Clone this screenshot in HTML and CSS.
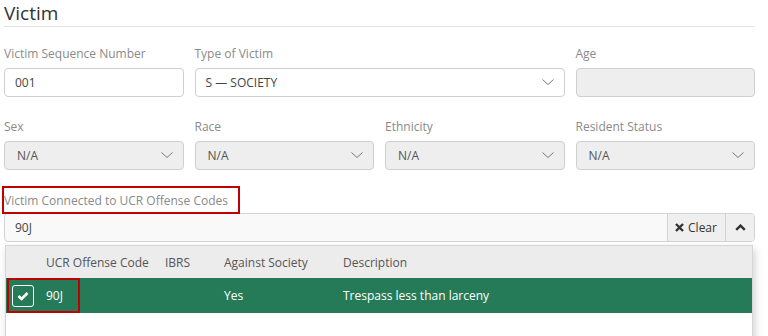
FILE: index.html
```html
<!DOCTYPE html>
<html>
<head>
<meta charset="utf-8">
<link rel="stylesheet" href="styles.css">
</head>
<body>
<div class="page">
  <h2 class="section-title">Victim</h2>

  <div class="row row-first">
    <div class="field">
      <label class="lbl">Victim Sequence Number</label>
      <div class="control">001</div>
    </div>
    <div class="field span2">
      <label class="lbl">Type of Victim</label>
      <div class="control select">S — SOCIETY
        <svg class="chev" width="12" height="7" viewBox="0 0 12 7"><polyline points="0.5,0.5 6,5.5 11.5,0.5" fill="none" stroke="#777" stroke-width="1"/></svg>
      </div>
    </div>
    <div class="field">
      <label class="lbl">Age</label>
      <div class="control disabled"></div>
    </div>
  </div>

  <div class="row row-second">
    <div class="field">
      <label class="lbl">Sex</label>
      <div class="control select disabled pad12">N/A
        <svg class="chev" width="12" height="7" viewBox="0 0 12 7"><polyline points="0.5,0.5 6,5.5 11.5,0.5" fill="none" stroke="#777" stroke-width="1"/></svg>
      </div>
    </div>
    <div class="field">
      <label class="lbl">Race</label>
      <div class="control select disabled pad12">N/A
        <svg class="chev" width="12" height="7" viewBox="0 0 12 7"><polyline points="0.5,0.5 6,5.5 11.5,0.5" fill="none" stroke="#777" stroke-width="1"/></svg>
      </div>
    </div>
    <div class="field">
      <label class="lbl">Ethnicity</label>
      <div class="control select disabled pad12">N/A
        <svg class="chev" width="12" height="7" viewBox="0 0 12 7"><polyline points="0.5,0.5 6,5.5 11.5,0.5" fill="none" stroke="#777" stroke-width="1"/></svg>
      </div>
    </div>
    <div class="field">
      <label class="lbl">Resident Status</label>
      <div class="control select disabled pad12">N/A
        <svg class="chev" width="12" height="7" viewBox="0 0 12 7"><polyline points="0.5,0.5 6,5.5 11.5,0.5" fill="none" stroke="#777" stroke-width="1"/></svg>
      </div>
    </div>
  </div>

  <div class="ucr">
    <label class="lbl lbl-marked">Victim Connected to UCR Offense Codes</label>
    <div class="combo">
      <div class="combo-text">90J</div>
      <div class="combo-btn clear-btn">
        <svg width="9" height="9" viewBox="0 0 9 9"><path d="M1 1 L8 8 M8 1 L1 8" stroke="#333" stroke-width="2.4" stroke-linecap="butt"/></svg>
        <span>Clear</span>
      </div>
      <div class="combo-btn caret-btn">
        <svg width="11" height="7" viewBox="0 0 11 7"><polyline points="1.2,5.8 5.5,1.6 9.8,5.8" fill="none" stroke="#333" stroke-width="2.4"/></svg>
      </div>
    </div>
    <div class="dropdown">
      <div class="trow thead">
        <div></div>
        <div>UCR Offense Code</div>
        <div>IBRS</div>
        <div>Against Society</div>
        <div>Description</div>
      </div>
      <div class="trow tsel">
        <div class="cbcell">
          <span class="cb">
            <svg width="12" height="10" viewBox="0 0 12 10"><polyline points="1.5,5 4.6,8 10.5,2" fill="none" stroke="#fff" stroke-width="2.6"/></svg>
          </span>
        </div>
        <div>90J</div>
        <div></div>
        <div>Yes</div>
        <div>Trespass less than larceny</div>
        <span class="mark"></span>
      </div>
    </div>
  </div>
</div>
</body>
</html>
```

FILE: styles.css
```css
* { box-sizing: border-box; }
html, body { margin: 0; padding: 0; background: #fff; overflow: hidden; }
body {
  font-family: "Open Sans", "Noto Sans", sans-serif;
  font-size: 12px;
  color: #555;
  height: 336px;
}
.page {
  width: 751px;
  margin-left: 4px;
}
.section-title {
  margin: 0;
  font-size: 19px;
  font-weight: 400;
  line-height: 26px;
  color: #333;
  border-bottom: 1px solid #e3e3e3;
}
.row {
  display: grid;
  grid-template-columns: repeat(4, 1fr);
  column-gap: 11px;
}
.row-first { margin-top: 18px; }
.row-second { margin-top: 21px; }
.span2 { grid-column: span 2; }
.field { display: flex; flex-direction: column; }
.lbl {
  display: block;
  line-height: 17px;
  color: #8a8a8a;
  margin-bottom: 6px;
  white-space: nowrap;
}
.control {
  height: 29px;
  border: 1px solid #cfcfcf;
  border-radius: 4px;
  padding: 0 10px;
  line-height: 27px;
  color: #444;
  background: #fff;
  display: flex;
  align-items: center;
}
.control.pad12 { padding-left: 12px; }
.control.disabled { background: #eeeeee; color: #555; }
.select { justify-content: space-between; }
.chev { margin-right: 0; flex: none; }

.ucr { margin-top: 16px; }
.lbl-marked {
  display: inline-block;
  margin: 0 0 0 -2px;
  border: 2px solid #c00000;
  padding: 4px 10px 3px 0;
  line-height: 17px;
  height: 28px;
}
.combo {
  display: flex;
  height: 29px;
  border: 1px solid #d3d3d3;
  border-radius: 4px;
  background: #f9f9f9;
  overflow: hidden;
  margin-top: -1px;
}
.combo-text {
  flex: 1;
  padding-left: 10px;
  line-height: 27px;
  color: #444;
}
.combo-btn {
  display: flex;
  align-items: center;
  justify-content: center;
  background: #efefef;
  border-left: 1px solid #d3d3d3;
  color: #333;
}
.clear-btn { width: 58px; gap: 4px; padding-right: 1px; }
.clear-btn span { line-height: 27px; }
.caret-btn { width: 29px; }

.dropdown {
  margin: 3px 2px 0 1px;
  height: 100px;
  border: 1px solid #d6d6d6;
  border-bottom: none;
  background: #fff;
  box-shadow: 2px 4px 8px rgba(0,0,0,0.18);
}
.trow {
  display: grid;
  grid-template-columns: 40px 119px 59px 119px 1fr;
  align-items: center;
  position: relative;
}
.thead {
  height: 32px;
  background: #ececec;
  color: #555;
}
.tsel {
  height: 35px;
  background: #257b57;
  color: #fff;
}
.cbcell { padding-left: 6px; display: flex; align-items: center; }
.cb {
  width: 22px;
  height: 22px;
  border: 1.5px solid #fff;
  border-radius: 3px;
  display: flex;
  align-items: center;
  justify-content: center;
}
.mark {
  position: absolute;
  left: 1px;
  top: 0;
  width: 73px;
  height: 35px;
  border: 2px solid #c00000;
}
```
